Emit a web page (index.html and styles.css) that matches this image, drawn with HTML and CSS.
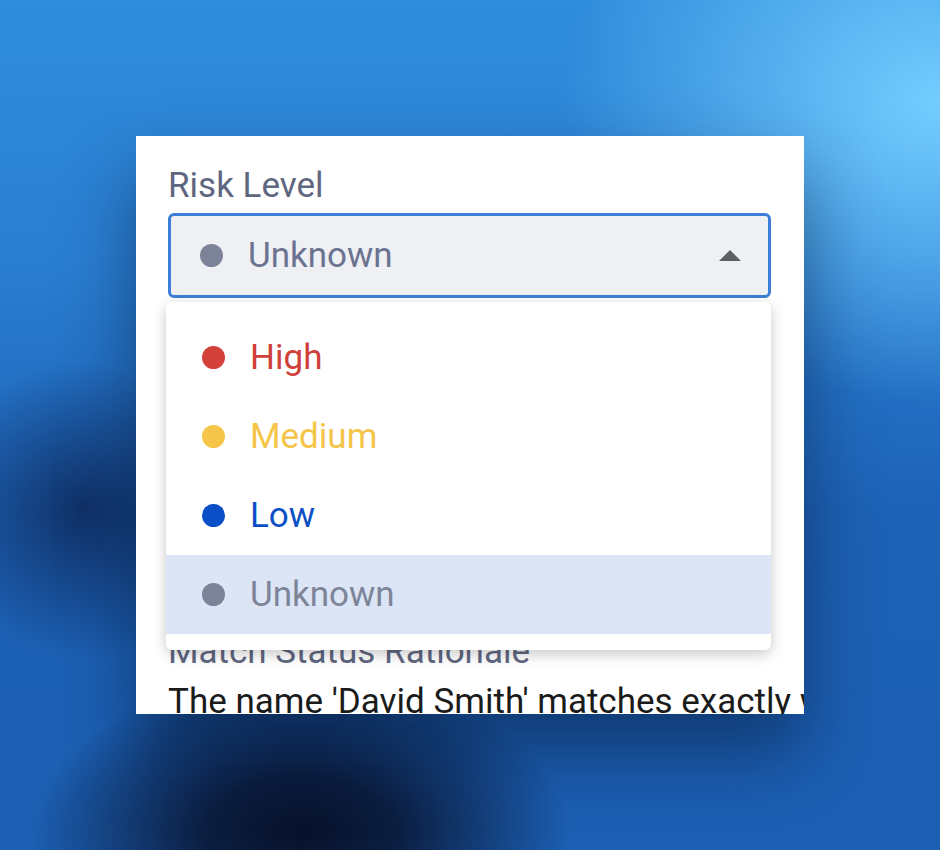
FILE: index.html
```html
<!DOCTYPE html>
<html lang="en">
<head>
    <meta charset="UTF-8">
    <meta name="viewport" content="width=device-width, initial-scale=1.0">
    <title>Risk Level</title>
    <link rel="stylesheet" href="styles.css">
</head>
<body>
    <div class="stage">
        <div class="card">
            <div class="field">
                <label class="field-label">Risk Level</label>
                <div class="select-wrap">
                    <div class="select">
                        <span class="dot dot-unknown"></span>
                        <span class="select-value">Unknown</span>
                        <span class="caret"></span>
                    </div>
                    <ul class="menu">
                        <li class="menu-item high"><span class="dot dot-high"></span>High</li>
                        <li class="menu-item medium"><span class="dot dot-medium"></span>Medium</li>
                        <li class="menu-item low"><span class="dot dot-low"></span>Low</li>
                        <li class="menu-item unknown selected"><span class="dot dot-unknown"></span>Unknown</li>
                    </ul>
                </div>
            </div>

            <div class="field rationale">
                <label class="field-label">Match Status Rationale</label>
                <p class="field-text">The name 'David Smith' matches exactly with the record on file.</p>
            </div>
        </div>
    </div>
</body>
</html>
```

FILE: styles.css
```css
body {
    margin: 0;
    height: 850px;
    overflow: hidden;
    font-family: Roboto, 'Liberation Sans', sans-serif;
    background:
        radial-gradient(ellipse 380px 300px at 100% 12%, #74cdff 0%, rgba(116, 205, 255, 0) 100%),
        radial-gradient(ellipse 270px 160px at 32% 98%, #08122c 0%, rgba(8, 18, 44, 0.85) 35%, rgba(8, 18, 44, 0) 100%),
        radial-gradient(ellipse 150px 150px at 9% 60%, rgba(10, 28, 70, 0.7) 0%, rgba(10, 28, 70, 0) 100%),
        linear-gradient(180deg, #2f8ddc 0%, #2a7fd3 30%, #1d62b6 60%, #1c5fb3 100%);
}
.stage {
    padding: 136px 0 0 136px;
}
.card {
    width: 668px;
    height: 578px;
    box-sizing: border-box;
    padding: 30px 33px 0 32px;
    background-color: #ffffff;
    box-shadow: 0 40px 70px rgba(3, 10, 35, 0.45);
    overflow: hidden;
    display: flex;
    flex-direction: column;
}
.field {
    display: flex;
    flex-direction: column;
    gap: 7px;
}
.rationale {
    margin-top: 334px;
}
.field-label {
    font-size: 35px;
    line-height: 40px;
    color: #5f6680;
}
.select-wrap {
    position: relative;
}
.select {
    height: 85px;
    box-sizing: border-box;
    border: 3px solid #3c7fd8;
    border-radius: 6px;
    background-color: #eef0f3;
    display: flex;
    align-items: center;
    padding: 0 27px 0 29px;
    font-size: 35px;
    color: #6b7391;
}
.select-value {
    flex: 1;
}
.dot {
    width: 23px;
    height: 23px;
    border-radius: 50%;
    flex-shrink: 0;
    margin-right: 25px;
}
.dot-unknown { background-color: #7c8298; }
.dot-high { background-color: #d4413a; }
.dot-medium { background-color: #f6c64a; }
.dot-low { background-color: #0a4fc7; }
.caret {
    width: 0;
    height: 0;
    border-left: 11px solid transparent;
    border-right: 11px solid transparent;
    border-bottom: 11px solid #5e5f63;
}
.menu {
    position: absolute;
    top: 89px;
    left: -2px;
    right: 0;
    margin: 0;
    padding: 16px 0;
    list-style: none;
    background-color: #ffffff;
    border-radius: 6px;
    box-shadow: 0 4px 14px rgba(0, 0, 0, 0.22);
}
.menu-item {
    height: 79px;
    display: flex;
    align-items: center;
    padding-left: 36px;
    font-size: 35px;
}
.menu-item.high { color: #d0403a; }
.menu-item.medium { color: #f4c548; }
.menu-item.low { color: #0b4fc6; }
.menu-item.unknown { color: #7e8498; }
.menu-item.selected {
    background-color: #dbe5f5;
}
.field-text {
    margin: 3px 0 0;
    font-size: 35px;
    line-height: 40px;
    color: #1b1b1b;
    white-space: nowrap;
}
```
